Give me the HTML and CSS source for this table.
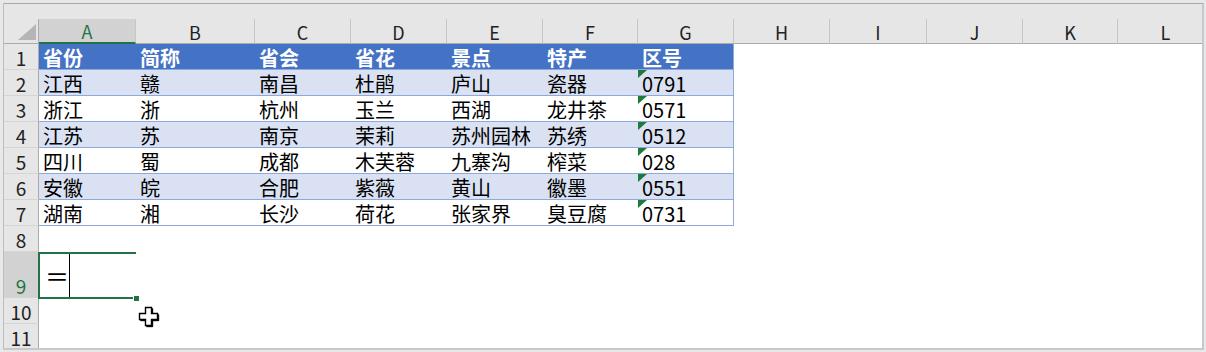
FILE: index.html
```html
<!DOCTYPE html>
<html lang="zh-CN">
<head>
<meta charset="utf-8">
<title>省份表</title>
<link rel="stylesheet" href="styles.css">
</head>
<body>
<div class="app">
  <div class="sheet">
    <div class="topband"></div>
    <div class="grid">
      <div class="corner"><div class="corner-tri"></div></div>
      <div class="ch ch-sel">A</div>
      <div class="ch">B</div>
      <div class="ch">C</div>
      <div class="ch">D</div>
      <div class="ch">E</div>
      <div class="ch">F</div>
      <div class="ch">G</div>
      <div class="ch">H</div>
      <div class="ch">I</div>
      <div class="ch">J</div>
      <div class="ch">K</div>
      <div class="ch">L</div>

      <div class="rh">1</div>
      <div class="c hd">省份</div><div class="c hd">简称</div><div class="c hd">省会</div><div class="c hd">省花</div><div class="c hd">景点</div><div class="c hd">特产</div><div class="c hd last">区号</div>

      <div class="rh">2</div>
      <div class="c band">江西</div><div class="c band">赣</div><div class="c band">南昌</div><div class="c band">杜鹃</div><div class="c band">庐山</div><div class="c band">瓷器</div><div class="c band last num">0791</div>

      <div class="rh">3</div>
      <div class="c">浙江</div><div class="c">浙</div><div class="c">杭州</div><div class="c">玉兰</div><div class="c">西湖</div><div class="c">龙井茶</div><div class="c last num">0571</div>

      <div class="rh">4</div>
      <div class="c band">江苏</div><div class="c band">苏</div><div class="c band">南京</div><div class="c band">茉莉</div><div class="c band">苏州园林</div><div class="c band">苏绣</div><div class="c band last num">0512</div>

      <div class="rh">5</div>
      <div class="c">四川</div><div class="c">蜀</div><div class="c">成都</div><div class="c">木芙蓉</div><div class="c">九寨沟</div><div class="c">榨菜</div><div class="c last num">028</div>

      <div class="rh">6</div>
      <div class="c band">安徽</div><div class="c band">皖</div><div class="c band">合肥</div><div class="c band">紫薇</div><div class="c band">黄山</div><div class="c band">徽墨</div><div class="c band last num">0551</div>

      <div class="rh">7</div>
      <div class="c">湖南</div><div class="c">湘</div><div class="c">长沙</div><div class="c">荷花</div><div class="c">张家界</div><div class="c">臭豆腐</div><div class="c last num">0731</div>

      <div class="rh">8</div>
      <div class="rh rh-sel">9</div>
      <div class="sel"><span class="eq">＝</span><span class="caret"></span></div>
      <div class="rh">10</div>
      <div class="rh">11</div>
    </div>
    <svg class="cursor" width="22" height="22" viewBox="0 0 22 22" aria-hidden="true">
      <path d="M7.5 1.5 H13.5 V7.5 H19.5 V13.5 H13.5 V19.5 H7.5 V13.5 H1.5 V7.5 H7.5 Z" transform="translate(1.2 1.2)" fill="#000" stroke="#000" stroke-width="1"/>
      <path d="M7.5 1.5 H13.5 V7.5 H19.5 V13.5 H13.5 V19.5 H7.5 V13.5 H1.5 V7.5 H7.5 Z" fill="#fff" stroke="#000" stroke-width="1.4"/>
    </svg>
  </div>
</div>
</body>
</html>
```

FILE: styles.css
```css
html, body {
  margin: 0;
  padding: 0;
}
body {
  width: 1206px;
  height: 352px;
  overflow: hidden;
  background: #e8eaec;
  font-family: "Noto Sans CJK SC", "Noto Sans", sans-serif;
}
.app {
  width: 1206px;
  height: 352px;
  box-sizing: border-box;
  padding: 3px 0 0 3px;
  background: #e7e8e9;
}
.sheet {
  position: relative;
  width: 1201px;
  height: 347px;
  box-sizing: border-box;
  border-top: 1px solid #a9a9a9;
  border-left: 1px solid #bdbdbd;
  border-right: 2px solid #c8c8c8;
  border-bottom: 2px solid #c8c8c8;
  background: #ffffff;
  overflow: hidden;
}
.topband {
  height: 15px;
  background: #e6e6e6;
}
.grid {
  display: grid;
  grid-template-columns: 35px 97px 119px 96px 96px 96px 95px 96px 96px 97px 96px 95px 96px;
  grid-template-rows: 25px repeat(8, 26px) 46px 26px 26px;
}
.corner {
  box-sizing: border-box;
  background: #e6e6e6;
  border-right: 1px solid #ababab;
  border-bottom: 1px solid #ababab;
  display: flex;
  justify-content: flex-end;
  align-items: flex-end;
  padding: 0 2px 3px 0;
}
.corner-tri {
  width: 18px;
  height: 16px;
  background: #b5b5b5;
  clip-path: polygon(100% 0, 100% 100%, 0 100%);
}
.ch {
  box-sizing: border-box;
  background: #e6e6e6;
  border-right: 1px solid #c6c6c6;
  border-bottom: 1px solid #ababab;
  display: flex;
  justify-content: center;
  align-items: flex-end;
  font-size: 18px;
  line-height: 22px;
  color: #222;
}
.ch-sel {
  background: #d2d2d2;
  color: #217346;
  border-bottom: 2px solid #217346;
}
.rh {
  grid-column: 1;
  box-sizing: border-box;
  background: #e6e6e6;
  border-right: 1px solid #ababab;
  border-bottom: 1px solid #d5d5d5;
  display: flex;
  justify-content: center;
  align-items: flex-end;
  font-size: 19px;
  line-height: 22px;
  color: #222;
}
.rh-sel {
  background: #d2d2d2;
  color: #217346;
}
.c {
  position: relative;
  box-sizing: border-box;
  border-bottom: 1px solid #8ea9db;
  display: flex;
  align-items: flex-end;
  padding-left: 4px;
  font-size: 20px;
  line-height: 22px;
  color: #000;
  white-space: nowrap;
}
.hd {
  background: #4472c4;
  color: #ffffff;
  font-weight: 700;
}
.band {
  background: #d9e1f2;
}
.last {
  border-right: 1px solid #8ea9db;
}
.num::before {
  content: "";
  position: absolute;
  left: 0;
  top: 0;
  width: 0;
  height: 0;
  border-top: 8px solid #1e7a3a;
  border-right: 9px solid transparent;
}
.sel {
  position: relative;
  display: flex;
  align-items: stretch;
  padding-left: 6px;
}
.sel::before {
  content: "";
  position: absolute;
  left: -1px;
  top: 0;
  right: 0;
  bottom: -1px;
  border: 2px solid #217346;
  border-right: 0;
}
.sel::after {
  content: "";
  position: absolute;
  right: -3px;
  bottom: -3px;
  width: 5px;
  height: 5px;
  background: #217346;
  border-left: 1px solid #ffffff;
  border-top: 1px solid #ffffff;
}
.eq {
  align-self: center;
  font-size: 24px;
  line-height: 24px;
  padding-top: 2px;
  color: #000;
}
.caret {
  width: 1px;
  background: #000;
  margin: 1px 0 1px 0;
}
.cursor {
  position: absolute;
  left: 134px;
  top: 302px;
}
```
